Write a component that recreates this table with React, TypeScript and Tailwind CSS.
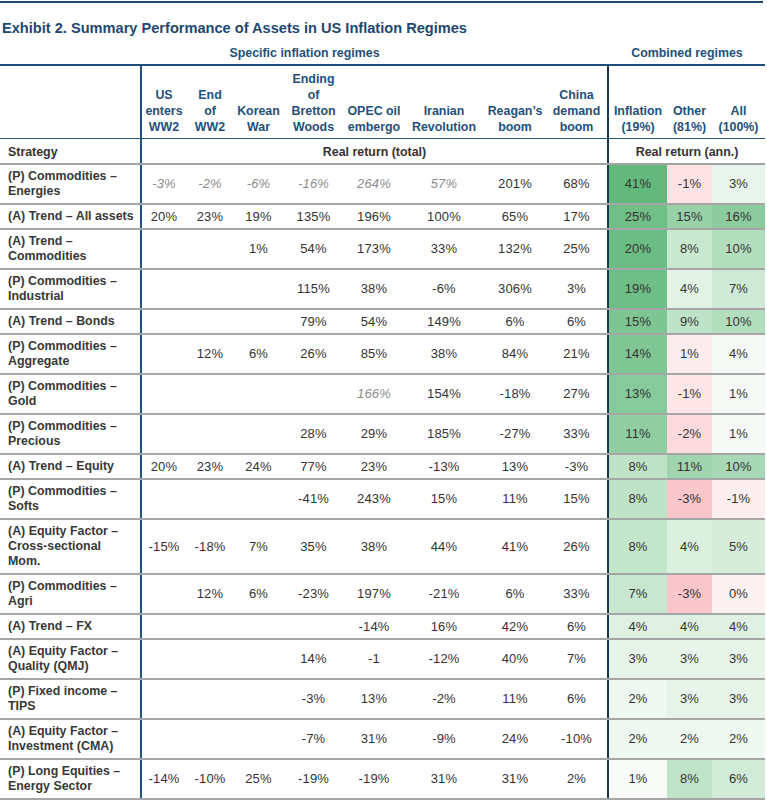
const COLS =
  "grid grid-cols-[142px_44px_48px_49px_61px_60px_80px_62px_63px_58px_45px_53px]";

const HEADERS: string[][] = [
  ["US", "enters", "WW2"],
  ["End", "of", "WW2"],
  ["Korean", "War"],
  ["Ending", "of", "Bretton", "Woods"],
  ["OPEC oil", "embergo"],
  ["Iranian", "Revolution"],
  ["Reagan’s", "boom"],
  ["China", "demand", "boom"],
];

const COMBINED_HEADERS: string[][] = [
  ["Inflation", "(19%)"],
  ["Other", "(81%)"],
  ["All", "(100%)"],
];

type Row = {
  label: string[];
  vals: string[];
  italic?: number[];
  comb: [string, string][];
};

const ROWS: Row[] = [
  {
    label: ["(P) Commodities –", "Energies"],
    vals: ["-3%", "-2%", "-6%", "-16%", "264%", "57%", "201%", "68%"],
    italic: [0, 1, 2, 3, 4, 5],
    comb: [["41%", "bg-[#63b97c]"], ["-1%", "bg-[#fde3e6]"], ["3%", "bg-[#e9f5ec]"]],
  },
  {
    label: ["(A) Trend – All assets"],
    vals: ["20%", "23%", "19%", "135%", "196%", "100%", "65%", "17%"],
    comb: [["25%", "bg-[#70bf88]"], ["15%", "bg-[#98d1a7]"], ["16%", "bg-[#8ccb9d]"]],
  },
  {
    label: ["(A) Trend –", "Commodities"],
    vals: ["", "", "1%", "54%", "173%", "33%", "132%", "25%"],
    comb: [["20%", "bg-[#6cbd85]"], ["8%", "bg-[#c8e8d0]"], ["10%", "bg-[#b3debe]"]],
  },
  {
    label: ["(P) Commodities –", "Industrial"],
    vals: ["", "", "", "115%", "38%", "-6%", "306%", "3%"],
    comb: [["19%", "bg-[#6fbe87]"], ["4%", "bg-[#e3f3e6]"], ["7%", "bg-[#cee9d5]"]],
  },
  {
    label: ["(A) Trend – Bonds"],
    vals: ["", "", "", "79%", "54%", "149%", "6%", "6%"],
    comb: [["15%", "bg-[#7ec593]"], ["9%", "bg-[#bfe3c8]"], ["10%", "bg-[#b3debe]"]],
  },
  {
    label: ["(P) Commodities –", "Aggregate"],
    vals: ["", "12%", "6%", "26%", "85%", "38%", "84%", "21%"],
    comb: [["14%", "bg-[#80c695]"], ["1%", "bg-[#fdecee]"], ["4%", "bg-[#f6faf6]"]],
  },
  {
    label: ["(P) Commodities –", "Gold"],
    vals: ["", "", "", "", "166%", "154%", "-18%", "27%"],
    italic: [4],
    comb: [["13%", "bg-[#86c99a]"], ["-1%", "bg-[#fde5e8]"], ["1%", "bg-[#f6faf6]"]],
  },
  {
    label: ["(P) Commodities –", "Precious"],
    vals: ["", "", "", "28%", "29%", "185%", "-27%", "33%"],
    comb: [["11%", "bg-[#90cea2]"], ["-2%", "bg-[#fcdadd]"], ["1%", "bg-[#f6faf6]"]],
  },
  {
    label: ["(A) Trend – Equity"],
    vals: ["20%", "23%", "24%", "77%", "23%", "-13%", "13%", "-3%"],
    comb: [["8%", "bg-[#bfe3c7]"], ["11%", "bg-[#a0d4ae]"], ["10%", "bg-[#a8d8b5]"]],
  },
  {
    label: ["(P) Commodities –", "Softs"],
    vals: ["", "", "", "-41%", "243%", "15%", "11%", "15%"],
    comb: [["8%", "bg-[#bfe3c7]"], ["-3%", "bg-[#f9c6cb]"], ["-1%", "bg-[#fdeef0]"]],
  },
  {
    label: ["(A) Equity Factor –", "Cross-sectional", "Mom."],
    vals: ["-15%", "-18%", "7%", "35%", "38%", "44%", "41%", "26%"],
    comb: [["8%", "bg-[#c4e6cb]"], ["4%", "bg-[#dcf0e0]"], ["5%", "bg-[#d7eddc]"]],
  },
  {
    label: ["(P) Commodities –", "Agri"],
    vals: ["", "12%", "6%", "-23%", "197%", "-21%", "6%", "33%"],
    comb: [["7%", "bg-[#c9e7d0]"], ["-3%", "bg-[#f9c6cb]"], ["0%", "bg-[#fdf1f2]"]],
  },
  {
    label: ["(A) Trend – FX"],
    vals: ["", "", "", "", "-14%", "16%", "42%", "6%"],
    comb: [["4%", "bg-[#dff1e3]"], ["4%", "bg-[#dff1e3]"], ["4%", "bg-[#dff1e3]"]],
  },
  {
    label: ["(A) Equity Factor –", "Quality (QMJ)"],
    vals: ["", "", "", "14%", "-1", "-12%", "40%", "7%"],
    comb: [["3%", "bg-[#e7f4ea]"], ["3%", "bg-[#e7f4ea]"], ["3%", "bg-[#e7f4ea]"]],
  },
  {
    label: ["(P) Fixed income –", "TIPS"],
    vals: ["", "", "", "-3%", "13%", "-2%", "11%", "6%"],
    comb: [["2%", "bg-[#f0f8f2]"], ["3%", "bg-[#e7f4ea]"], ["3%", "bg-[#e7f4ea]"]],
  },
  {
    label: ["(A) Equity Factor –", "Investment (CMA)"],
    vals: ["", "", "", "-7%", "31%", "-9%", "24%", "-10%"],
    comb: [["2%", "bg-[#f0f8f2]"], ["2%", "bg-[#f0f8f2]"], ["2%", "bg-[#f0f8f2]"]],
  },
  {
    label: ["(P) Long Equities –", "Energy Sector"],
    vals: ["-14%", "-10%", "25%", "-19%", "-19%", "31%", "31%", "2%"],
    comb: [["1%", "bg-[#f8fbf8]"], ["8%", "bg-[#c0e4c8]"], ["6%", "bg-[#d2ebd8]"]],
  },
];

export default function App() {
  return (
    <div className="w-[767px] bg-white font-['Liberation_Sans',Arial,sans-serif] text-[#333]">
      {/* top rule + title */}
      <div className="mt-[1px] w-[763px] border-t-2 border-[#1f4770]" />
      <div className="pl-[2px] pt-[16px] pb-[5px] text-[14.6px] leading-[18px] font-bold text-[#1f4770]">
        Exhibit 2. Summary Performance of Assets in US Inflation Regimes
      </div>

      <div className="w-[765px] text-[12.4px]">
        {/* group header */}
        <div className={COLS + " h-[24px] border-b-2 border-[#1f4e7c] font-bold text-[#24507c]"}>
          <div className="col-span-9 flex items-center justify-center">Specific inflation regimes</div>
          <div className="col-span-3 flex items-center justify-center">Combined regimes</div>
        </div>

        {/* column headers */}
        <div className={COLS + " h-[73px] border-b border-[#2a5580] font-bold text-[#24507c] leading-[16px]"}>
          <div className="border-r-2 border-[#1f5182]" />
          {HEADERS.map((h, i) => (
            <div
              key={i}
              className={
                "flex flex-col items-center justify-end pb-[3px] text-center whitespace-nowrap " +
                (i === 7 ? "border-r-2 border-[#17384f]" : "")
              }
            >
              {h.map((l, j) => (
                <span key={j}>{l}</span>
              ))}
            </div>
          ))}
          {COMBINED_HEADERS.map((h, i) => (
            <div key={i} className="flex flex-col items-center justify-end pb-[3px] text-center whitespace-nowrap">
              {h.map((l, j) => (
                <span key={j}>{l}</span>
              ))}
            </div>
          ))}
        </div>

        {/* sub header */}
        <div className={COLS + " h-[26px] border-b-2 border-[#a3a3a3] font-bold text-[#333]"}>
          <div className="flex items-center pl-2 pt-[2px] border-r-2 border-[#1f5182]">Strategy</div>
          <div className="col-span-8 flex items-center justify-center pt-[2px] border-r-2 border-[#17384f]">
            Real return (total)
          </div>
          <div className="col-span-3 flex items-center justify-center pt-[2px]">Real return (ann.)</div>
        </div>

        {/* body */}
        {ROWS.map((r, ri) => (
          <div key={ri} className={COLS + " border-b-2 border-[#a6a6a6]"}>
            <div className="flex flex-col justify-center pl-2 py-[4px] leading-[15px] font-bold text-[#383838] border-r-2 border-[#1f5182] whitespace-nowrap">
              {r.label.map((l, j) => (
                <span key={j}>{l}</span>
              ))}
            </div>
            {r.vals.map((v, vi) => {
              const it = r.italic?.includes(vi);
              return (
                <div
                  key={vi}
                  className={
                    "flex items-center justify-center text-[13px] tracking-[0.2px] " +
                    (it ? "italic text-[#8c8c8c] " : "") +
                    (vi === 7 ? "border-r-2 border-[#17384f]" : "")
                  }
                >
                  {v}
                </div>
              );
            })}
            {r.comb.map(([v, bg], ci) => (
              <div key={ci} className={"flex items-center justify-center text-[13px] tracking-[0.2px] " + bg}>
                {v}
              </div>
            ))}
          </div>
        ))}
      </div>
    </div>
  );
}
